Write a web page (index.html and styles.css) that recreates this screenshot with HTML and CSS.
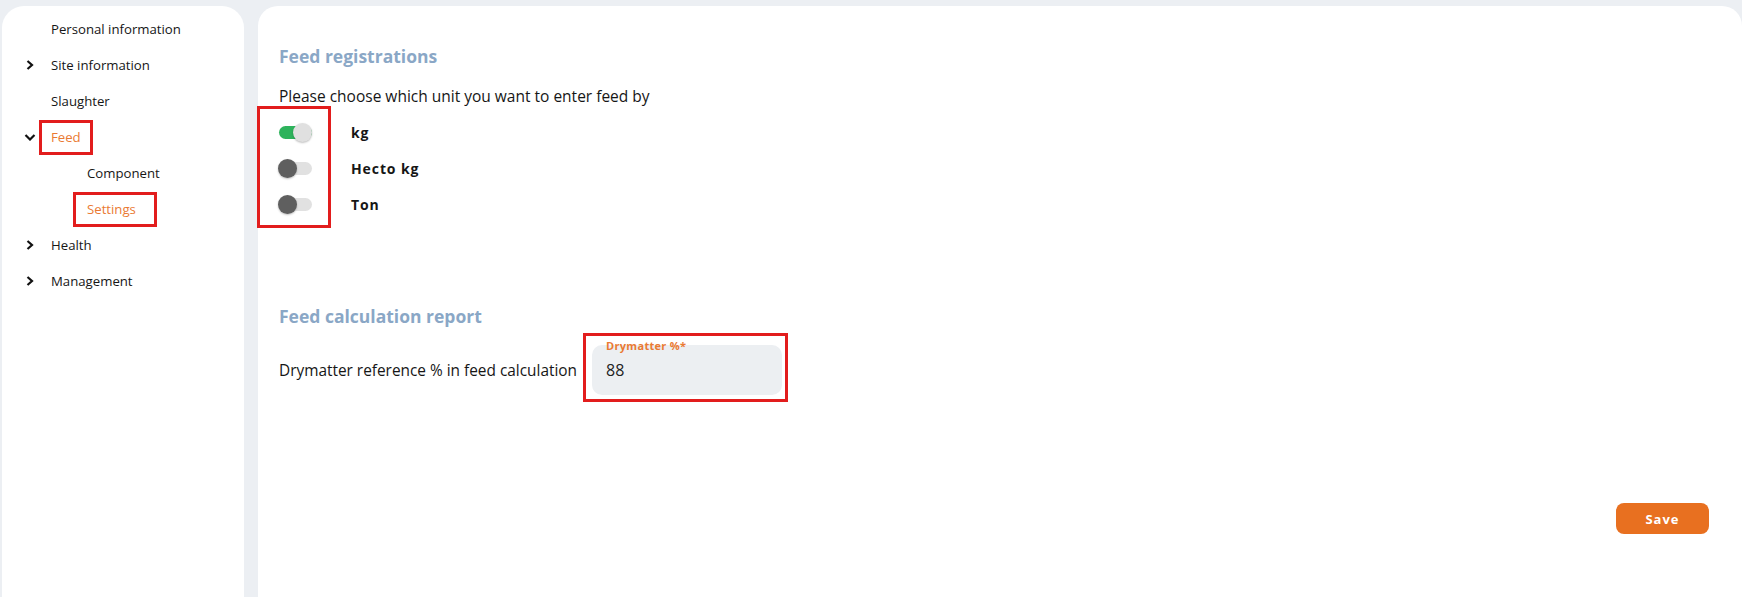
FILE: index.html
```html
<!DOCTYPE html>
<html lang="en">
<head>
    <meta charset="UTF-8">
    <meta name="viewport" content="width=device-width, initial-scale=1.0">
    <title>Feed settings</title>
    <link rel="stylesheet" href="styles.css">
</head>
<body>

    <aside class="sidebar">
        <ul class="nav">
            <li class="nav-item"><span class="chev"></span><span>Personal information</span></li>
            <li class="nav-item"><span class="chev"><svg class="right" viewBox="0 0 8 10" width="8" height="10"><path d="M1.5 1 L6 5 L1.5 9" fill="none" stroke="#111" stroke-width="2.2"/></svg></span><span>Site information</span></li>
            <li class="nav-item"><span class="chev"></span><span>Slaughter</span></li>
            <li class="nav-item active"><span class="chev"><svg class="down" viewBox="0 0 12 7" width="12" height="7"><path d="M1.5 1 L6 5.5 L10.5 1" fill="none" stroke="#111" stroke-width="2.2"/></svg></span><span class="mark">Feed</span></li>
            <li class="nav-item sub"><span>Component</span></li>
            <li class="nav-item sub active"><span class="mark">Settings</span></li>
            <li class="nav-item"><span class="chev"><svg class="right" viewBox="0 0 8 10" width="8" height="10"><path d="M1.5 1 L6 5 L1.5 9" fill="none" stroke="#111" stroke-width="2.2"/></svg></span><span>Health</span></li>
            <li class="nav-item"><span class="chev"><svg class="right" viewBox="0 0 8 10" width="8" height="10"><path d="M1.5 1 L6 5 L1.5 9" fill="none" stroke="#111" stroke-width="2.2"/></svg></span><span>Management</span></li>
        </ul>
    </aside>

    <main class="content">
        <section class="block">
            <h2 class="block-title">Feed registrations</h2>
            <p class="lead">Please choose which unit you want to enter feed by</p>
            <div class="units">
                <div class="unit">
                    <span class="toggle on"><span class="knob"></span></span>
                    <span class="unit-label">kg</span>
                </div>
                <div class="unit">
                    <span class="toggle"><span class="knob"></span></span>
                    <span class="unit-label">Hecto kg</span>
                </div>
                <div class="unit">
                    <span class="toggle"><span class="knob"></span></span>
                    <span class="unit-label">Ton</span>
                </div>
            </div>
        </section>

        <section class="block calc">
            <h2 class="block-title">Feed calculation report</h2>
            <div class="field-row">
                <span>Drymatter reference % in feed calculation</span>
                <div class="field">
                    <label class="field-label">Drymatter %*</label>
                    <span class="field-value">88</span>
                </div>
            </div>
        </section>

        <div class="actions">
            <button class="save">Save</button>
        </div>
    </main>

</body>
</html>
```

FILE: styles.css
```css
body {
    margin: 0;
    height: 597px;
    overflow: hidden;
    background-color: #eceff3;
    font-family: 'Open Sans', 'Liberation Sans', sans-serif;
    color: #161616;
    display: flex;
    gap: 14px;
    padding: 6px 0 0 2px;
    box-sizing: border-box;
}

.sidebar {
    width: 242px;
    flex-shrink: 0;
    background-color: #fff;
    border-radius: 22px 22px 0 0;
}

.nav {
    list-style: none;
    margin: 0;
    padding: 5px 0 0 22px;
}

.nav-item {
    height: 36px;
    display: flex;
    align-items: center;
    font-size: 13.2px;
}

.chev {
    width: 27px;
    flex-shrink: 0;
    display: flex;
    align-items: center;
}

.chev .right {
    margin-left: 2px;
}

.chev .down {
    margin-top: 1px;
}

.nav-item.sub {
    padding-left: 63px;
}

.nav-item.active {
    color: #ea7a33;
}

.mark {
    border: 3px solid #e21d1d;
    padding: 5px 9px 6px;
    margin: -8px -12px;
}

.nav-item.sub .mark {
    padding: 5px 18px 6px 11px;
    margin: -8px -21px -8px -14px;
}

.content {
    flex: 1;
    background-color: #fff;
    border-radius: 20px 20px 0 0;
    padding: 40px 0 0 21px;
    display: flex;
    flex-direction: column;
}

.block-title {
    margin: 0;
    font-size: 17.5px;
    font-weight: 700;
    color: #8aa7c6;
    line-height: 20px;
}

.lead {
    margin: 20px 0 0;
    font-size: 15.5px;
    line-height: 20px;
}

.units {
    position: relative;
    margin-top: 8px;
}

.units::after {
    content: '';
    position: absolute;
    left: -22px;
    top: -8px;
    width: 68px;
    height: 116px;
    border: 3px solid #e21d1d;
}

.unit {
    height: 36px;
    display: flex;
    align-items: center;
}

.toggle {
    position: relative;
    width: 33px;
    height: 13px;
    border-radius: 7px;
    background-color: #e1e1e1;
    margin-right: 39px;
}

.toggle.on {
    background-color: #2eb35c;
}

.knob {
    position: absolute;
    top: -3px;
    left: -1px;
    width: 19px;
    height: 19px;
    border-radius: 50%;
    background-color: #5f5f5f;
    box-shadow: 0 1px 2px rgba(0, 0, 0, 0.25);
}

.toggle.on .knob {
    left: 14px;
    background-color: #e0e0e0;
}

.unit-label {
    font-size: 14px;
    font-weight: 700;
    letter-spacing: 0.9px;
}

.calc {
    margin-top: 84px;
}

.field-row {
    display: flex;
    align-items: center;
    gap: 15px;
    margin-top: 19px;
    font-size: 15.4px;
}

.field {
    position: relative;
    width: 190px;
    height: 50px;
    border-radius: 10px;
    background-color: #eceff2;
    display: flex;
    align-items: center;
    padding-left: 14px;
    box-sizing: border-box;
}

.field::after {
    content: '';
    position: absolute;
    left: -9px;
    top: -12px;
    width: 199px;
    height: 63px;
    border: 3px solid #e21d1d;
}

.field-label {
    position: absolute;
    top: -7px;
    left: 14px;
    font-size: 11px;
    font-weight: 700;
    letter-spacing: 0.3px;
    color: #ea7a33;
}

.field-value {
    font-size: 16px;
    color: #222;
}

.actions {
    display: flex;
    justify-content: flex-end;
    padding-right: 33px;
    margin-top: 108px;
}

.save {
    width: 93px;
    height: 31px;
    border: none;
    border-radius: 8px;
    background-color: #e87020;
    color: #fff;
    font-family: inherit;
    font-size: 13px;
    font-weight: 700;
    letter-spacing: 1px;
}
```
